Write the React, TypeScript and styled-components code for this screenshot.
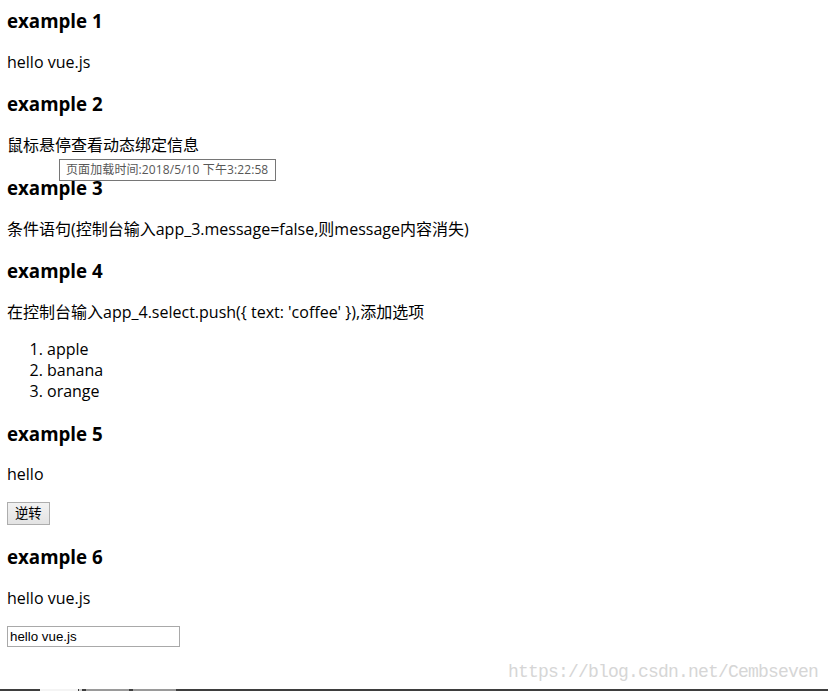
import React from "react";
import styled, { createGlobalStyle } from "styled-components";

const GlobalStyle = createGlobalStyle`
  html, body {
    margin: 0;
    padding: 0;
    background: #ffffff;
  }
  body {
    font-family: "Open Sans", "Noto Sans CJK SC", sans-serif;
    font-size: 16px;
    color: #000000;
  }
`;

const Page = styled.div`
  position: relative;
  display: flex;
  flex-direction: column;
  height: 100vh;
  overflow: hidden;
`;

const Content = styled.main`
  flex: 1;
  padding: 8px 7px 0 7px;
`;

const Heading = styled.h3<{ $first?: boolean }>`
  margin: ${(p) => (p.$first ? "0" : "18.72px")} 0 18.72px;
  font-size: 18.72px;
  line-height: 25px;
  font-weight: 700;
`;

const Para = styled.p`
  position: relative;
  margin: 16px 0;
  line-height: 21px;
`;

const Tooltip = styled.span`
  position: absolute;
  left: 52px;
  top: 24px;
  height: 20px;
  padding: 0 7px 0 6px;
  border: 1px solid #767676;
  background: #ffffff;
  color: #575757;
  font-size: 12px;
  letter-spacing: 0.1px;
  line-height: 20px;
  white-space: nowrap;
`;

const List = styled.ol`
  margin: 16px 0;
  padding-left: 40px;
  line-height: 21px;
`;

const ButtonRow = styled.div`
  height: 24px;
`;

const ActionButton = styled.button`
  height: 23px;
  padding: 0 7px;
  border: 1px solid #adadad;
  border-radius: 0;
  background: linear-gradient(#f2f2f2, #e3e3e3);
  color: #000000;
  font-family: "Open Sans", "Noto Sans CJK SC", sans-serif;
  font-size: 13.33px;
  line-height: 19px;
`;

const InputRow = styled.div`
  padding-top: 1px;
`;

const TextInput = styled.input`
  display: block;
  box-sizing: border-box;
  width: 173px;
  height: 21px;
  padding: 0 2px;
  border: 1px solid #a9a9a9;
  font-family: "Liberation Sans", Arial, sans-serif;
  font-size: 13.33px;
  color: #000000;
  outline: none;
`;

const Watermark = styled.div`
  position: absolute;
  right: 10px;
  bottom: 9px;
  font-family: "Liberation Mono", monospace;
  font-size: 18px;
  letter-spacing: -0.8px;
  line-height: 20px;
  color: #d6d6d6;
  white-space: nowrap;
`;

const Taskbar = styled.div`
  display: flex;
  height: 2px;
  background: #3e3e3e;
`;

const TaskSegment = styled.span<{ $w: number; $ml: number; $c: string }>`
  width: ${(p) => p.$w}px;
  margin-left: ${(p) => p.$ml}px;
  background: ${(p) => p.$c};
`;

export default function App() {
  return (
    <>
      <GlobalStyle />
      <Page>
        <Content>
          <Heading $first>example 1</Heading>
          <Para>hello vue.js</Para>

          <Heading>example 2</Heading>
          <Para>
            鼠标悬停查看动态绑定信息
            <Tooltip>页面加载时间:2018/5/10 下午3:22:58</Tooltip>
          </Para>

          <Heading>example 3</Heading>
          <Para>条件语句(控制台输入app_3.message=false,则message内容消失)</Para>

          <Heading>example 4</Heading>
          <Para>在控制台输入app_4.select.push({"{"} text: 'coffee' {"}"}),添加选项</Para>
          <List>
            <li>apple</li>
            <li>banana</li>
            <li>orange</li>
          </List>

          <Heading>example 5</Heading>
          <Para>hello</Para>
          <ButtonRow>
            <ActionButton>逆转</ActionButton>
          </ButtonRow>

          <Heading>example 6</Heading>
          <Para>hello vue.js</Para>
          <InputRow>
            <TextInput defaultValue="hello vue.js" />
          </InputRow>
        </Content>
        <Watermark>https://blog.csdn.net/Cembseven</Watermark>
        <Taskbar>
          <TaskSegment $w={38} $ml={40} $c="#f4f4f4" />
          <TaskSegment $w={3} $ml={1} $c="#d0d0d0" />
          <TaskSegment $w={43} $ml={4} $c="#9a9a9a" />
          <TaskSegment $w={43} $ml={4} $c="#9a9a9a" />
        </Taskbar>
      </Page>
    </>
  );
}
